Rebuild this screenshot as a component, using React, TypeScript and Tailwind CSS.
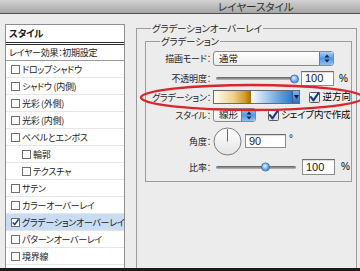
import React from "react";

const jp = "font-['Noto_Sans_CJK_JP','Noto_Sans',sans-serif] [font-feature-settings:'palt']";
const num = "font-['Liberation_Sans','Noto_Sans',sans-serif]";

function Box({ checked = false }: { checked?: boolean }) {
  return (
    <svg width="9" height="9" viewBox="0 0 9 9" className="shrink-0">
      <rect x="0.5" y="0.5" width="8" height="8" fill="#fff" stroke="#6f6f6f" />
      {checked && <path d="M1.8 4.4 L3.7 6.6 L7.6 1.2" fill="none" stroke="#1f3f7a" strokeWidth="1.5" />}
    </svg>
  );
}

function AquaCheck() {
  return (
    <svg width="11" height="11" viewBox="0 0 11 11" className="shrink-0">
      <defs>
        <linearGradient id="cb" x1="0" y1="0" x2="0" y2="1">
          <stop offset="0" stopColor="#ffffff" />
          <stop offset="1" stopColor="#dcdcdc" />
        </linearGradient>
      </defs>
      <rect x="0.5" y="0.5" width="10" height="10" rx="1" fill="url(#cb)" stroke="#5b5b5b" />
      <path d="M2 5.2 L4.4 8.3 L9.6 0.8" fill="none" stroke="#163a86" strokeWidth="2.1" strokeLinecap="round" strokeLinejoin="round" />
    </svg>
  );
}

function Stepper() {
  return (
    <div className="w-[14px] h-full rounded-r-[3px] bg-gradient-to-b from-[#a8d0f8] via-[#4f97e6] to-[#8cc0f2] border-l border-[#5a7fb0] flex items-center justify-center">
      <svg width="6" height="9" viewBox="0 0 6 9">
        <path d="M3 0.5 L5.5 3.5 L0.5 3.5 Z" fill="#10213f" />
        <path d="M3 8.5 L5.5 5.5 L0.5 5.5 Z" fill="#10213f" />
      </svg>
    </div>
  );
}

function Select({ w, text }: { w: string; text: string }) {
  return (
    <div className={`${w} h-full flex rounded-[3px] border border-[#8a8a8a] bg-gradient-to-b from-[#ffffff] to-[#ededed] overflow-hidden`}>
      <div className={`flex-1 pl-[5px] text-[9.5px] leading-none flex items-center text-[#1a1a1a] whitespace-nowrap ${jp}`}>{text}</div>
      <Stepper />
    </div>
  );
}

function Slider({ w, knob }: { w: string; knob: number }) {
  return (
    <div className={`${w} h-full relative flex items-center`}>
      <div className="ml-[3px] flex-1 h-[3px] rounded-full bg-gradient-to-b from-[#5f5f5f] to-[#bdbdbd]" />
      <div
        className="absolute top-1/2 -translate-y-1/2 w-[9px] h-[9px] rounded-full border border-[#3d6fa8] bg-[radial-gradient(circle_at_40%_35%,#e6f2ff_0%,#7fb6ef_45%,#2f7ad0_100%)]"
        style={{ left: knob - 4 }}
      />
    </div>
  );
}

function Input({ w, h, text }: { w: string; h: string; text: string }) {
  return (
    <div className={`${w} ${h} bg-white border border-[#8c8c8c] border-t-[#6a6a6a] shadow-[inset_0_1px_1px_rgba(0,0,0,0.15)] flex items-center pl-[3px] text-[11px] leading-none text-[#1a1a1a] ${num}`}>
      {text}
    </div>
  );
}

function Label({ children }: { children: React.ReactNode }) {
  return <div className={`w-[65px] shrink-0 text-right text-[9px] tracking-[-0.2px] leading-none text-[#1e1e1e] whitespace-nowrap ${jp}`}>{children}</div>;
}

const items: { t: string; indent?: boolean; sel?: boolean }[] = [
  { t: "ドロップシャドウ" },
  { t: "シャドウ (内側)" },
  { t: "光彩 (外側)" },
  { t: "光彩 (内側)" },
  { t: "ベベルとエンボス" },
  { t: "輪郭", indent: true },
  { t: "テクスチャ", indent: true },
  { t: "サテン" },
  { t: "カラーオーバーレイ" },
  { t: "グラデーションオーバーレイ", sel: true },
  { t: "パターンオーバーレイ" },
  { t: "境界線" },
];

export default function App() {
  return (
    <div className={`w-[360px] h-[271px] overflow-hidden bg-[#ececec] flex flex-col relative ${jp}`}>
      <div className="h-[14px] shrink-0 bg-gradient-to-b from-[#d2d2d2] to-[#a6a6a6] border-b border-[#4e4e4e] flex items-center">
        <span className={`ml-[218px] text-[10.5px] leading-[12px] text-[#2e2e2e] whitespace-nowrap ${jp}`}>レイヤースタイル</span>
      </div>

      <div className="flex flex-1 min-h-0">
        {/* left list */}
        <div className="ml-[5px] mt-[10px] w-[120px] shrink-0 bg-white border border-[#8e8e8e] border-b-0 flex flex-col text-[9px] tracking-[-0.3px] leading-none text-[#1a1a1a]">
          <div className="h-[20px] pl-[3px] flex items-center font-semibold text-[9.5px] border-b-[3px] border-double border-[#2a2a2a]">スタイル</div>
          <div className="h-[16px] pl-[3px] flex items-center border-b border-[#9a9a9a] whitespace-nowrap">レイヤー効果：初期設定</div>
          {items.map((it) => (
            <div
              key={it.t}
              className={`h-[17px] shrink-0 flex items-center gap-[2px] border-b border-[#e6e6e6] whitespace-nowrap ${it.indent ? "pl-[16px]" : "pl-[5px]"} ${it.sel ? "bg-[#c8dcf4]" : ""}`}
            >
              <Box checked={it.sel} />
              <span>{it.t}</span>
            </div>
          ))}
        </div>

        {/* right */}
        <fieldset className="ml-[11px] mt-[8px] w-[221px] border border-[#9c9c9c] border-b-0 p-0 m-0 min-w-0">
          <legend className="ml-[14px] px-[1px] text-[9.5px] tracking-[-0.2px] leading-[12px] text-[#1e1e1e] whitespace-nowrap">グラデーションオーバーレイ</legend>
          <div className="pl-[8px] pr-[4px] pt-[1px]">
            <fieldset className="border border-[#9c9c9c] p-0 m-0 min-w-0">
              <legend className="ml-[14px] px-[1px] text-[9.5px] tracking-[-0.2px] leading-[12px] text-[#1e1e1e] whitespace-nowrap">グラデーション</legend>
              <div className="flex flex-col pb-[6px]">
                <div className="mt-[4px] h-[15px] flex items-center">
                  <Label>描画モード：</Label>
                  <div className="ml-[2px] h-full flex">
                    <Select w="w-[121px]" text="通常" />
                  </div>
                </div>
                <div className="mt-[5px] h-[15px] flex items-center">
                  <Label>不透明度：</Label>
                  <div className="ml-[2px] h-full flex">
                    <Slider w="w-[82px]" knob={81} />
                  </div>
                  <div className="ml-[6px]">
                    <Input w="w-[33px]" h="h-[15px]" text="100" />
                  </div>
                  <span className={`ml-[5px] text-[10px] leading-none ${num}`}>%</span>
                </div>
                <div className="mt-[4px] h-[14px] flex items-center">
                  <Label>グラデーション：</Label>
                  <div className="ml-[2px] w-[96px] h-full flex border border-[#6a6a6a]">
                    <div className="flex-1 bg-[linear-gradient(to_right,#fffdf2_0%,#f0d08a_25%,#d29a22_40%,#a86e00_47%,#ffffff_47%,#bcd9f4_62%,#5d9fdc_85%,#2f7acc_100%)]" />
                    <div className="w-[7px] bg-gradient-to-b from-[#7fb4ec] to-[#2c6fc0] border-l border-[#3a5f90] flex items-center justify-center">
                      <svg width="5" height="4" viewBox="0 0 5 4">
                        <path d="M0 0 L5 0 L2.5 4 Z" fill="#0e1a33" />
                      </svg>
                    </div>
                  </div>
                  <div className="ml-[9px]">
                    <AquaCheck />
                  </div>
                  <span className="ml-[2px] text-[9.5px] leading-none whitespace-nowrap">逆方向</span>
                </div>
                <div className="mt-[4px] h-[14px] flex items-center">
                  <Label>スタイル：</Label>
                  <div className="ml-[2px] h-full flex">
                    <Select w="w-[43px]" text="線形" />
                  </div>
                  <div className="ml-[12px]">
                    <AquaCheck />
                  </div>
                  <span className="ml-[2px] text-[9.5px] tracking-[-0.2px] leading-none whitespace-nowrap">シェイプ内で作成</span>
                </div>
                <div className="mt-[5px] h-[28px] flex items-center">
                  <Label>角度：</Label>
                  <svg width="29" height="29" viewBox="0 0 29 29" className="ml-[2px] shrink-0">
                    <defs>
                      <linearGradient id="dial" x1="0" y1="0" x2="0" y2="1">
                        <stop offset="0" stopColor="#ffffff" />
                        <stop offset="1" stopColor="#e4e4e4" />
                      </linearGradient>
                    </defs>
                    <circle cx="14.5" cy="14.5" r="13.5" fill="url(#dial)" stroke="#7c7c7c" />
                    <line x1="14.5" y1="14.5" x2="14.5" y2="2" stroke="#6a6a6a" strokeWidth="1" />
                  </svg>
                  <div className="ml-[3px]">
                    <Input w="w-[41px]" h="h-[14px]" text="90" />
                  </div>
                  <span className={`ml-[3px] self-start mt-[7px] text-[10px] leading-none ${num}`}>°</span>
                </div>
                <div className="mt-[4px] h-[16px] flex items-center">
                  <Label>比率：</Label>
                  <div className="ml-[2px] h-full flex">
                    <Slider w="w-[83px]" knob={52} />
                  </div>
                  <div className="ml-[6px]">
                    <Input w="w-[33px]" h="h-[16px]" text="100" />
                  </div>
                  <span className={`ml-[6px] text-[10px] leading-none ${num}`}>%</span>
                </div>
              </div>
            </fieldset>
          </div>
        </fieldset>
      </div>

      <div className="h-[3px] shrink-0 bg-[#1c1c1c]" />

      <svg className="absolute left-0 top-0 pointer-events-none" width="360" height="271" viewBox="0 0 360 271">
        <ellipse cx="252" cy="97.5" rx="111" ry="12.5" fill="none" stroke="#d9262b" strokeWidth="2.4" />
      </svg>
    </div>
  );
}
